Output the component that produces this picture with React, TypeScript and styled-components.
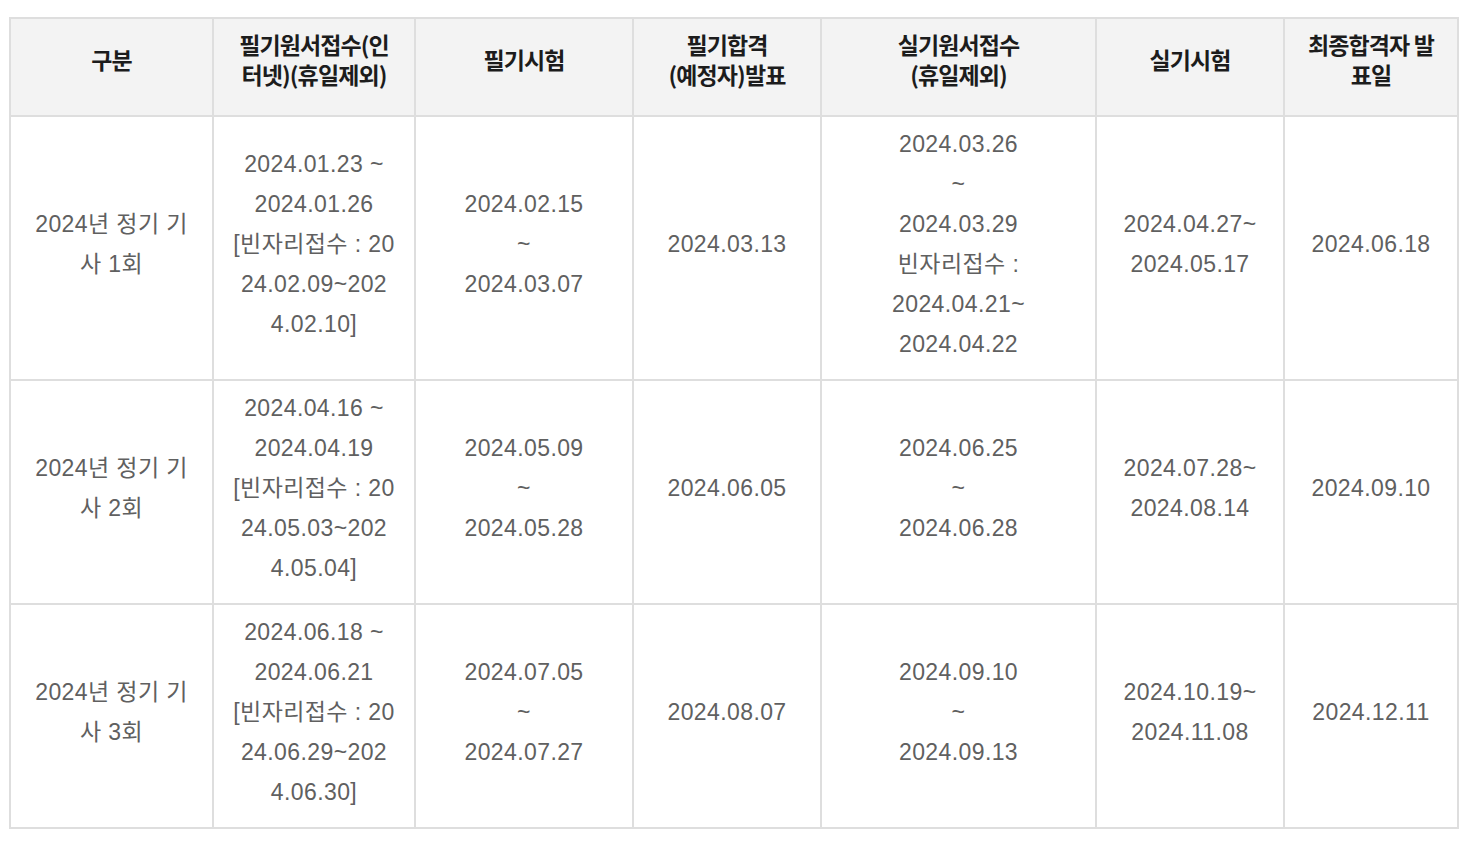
import styled, { createGlobalStyle } from "styled-components";

const GlobalStyle = createGlobalStyle`
  html, body {
    margin: 0;
    padding: 0;
    background: #ffffff;
  }
  body {
    font-family: "Liberation Sans", "Noto Sans CJK KR", sans-serif;
  }
`;

const headers = [
  ["구분"],
  ["필기원서접수(인", "터넷)(휴일제외)"],
  ["필기시험"],
  ["필기합격", "(예정자)발표"],
  ["실기원서접수", "(휴일제외)"],
  ["실기시험"],
  ["최종합격자 발", "표일"],
];

const rows = [
  [
    ["2024년 정기 기", "사 1회"],
    ["2024.01.23 ~", "2024.01.26", "[빈자리접수 : 20", "24.02.09~202", "4.02.10]"],
    ["2024.02.15", "~", "2024.03.07"],
    ["2024.03.13"],
    ["2024.03.26", "~", "2024.03.29", "빈자리접수 :", "2024.04.21~", "2024.04.22"],
    ["2024.04.27~", "2024.05.17"],
    ["2024.06.18"],
  ],
  [
    ["2024년 정기 기", "사 2회"],
    ["2024.04.16 ~", "2024.04.19", "[빈자리접수 : 20", "24.05.03~202", "4.05.04]"],
    ["2024.05.09", "~", "2024.05.28"],
    ["2024.06.05"],
    ["2024.06.25", "~", "2024.06.28"],
    ["2024.07.28~", "2024.08.14"],
    ["2024.09.10"],
  ],
  [
    ["2024년 정기 기", "사 3회"],
    ["2024.06.18 ~", "2024.06.21", "[빈자리접수 : 20", "24.06.29~202", "4.06.30]"],
    ["2024.07.05", "~", "2024.07.27"],
    ["2024.08.07"],
    ["2024.09.10", "~", "2024.09.13"],
    ["2024.10.19~", "2024.11.08"],
    ["2024.12.11"],
  ],
];

const App = () => {
  return (
    <>
      <GlobalStyle />
      <Page>
        <Table>
          <Row>
            {headers.map((lines, i) => (
              <HeadCell key={"h" + i}>
                {lines.map((l, j) => (
                  <Line key={j}>{l}</Line>
                ))}
              </HeadCell>
            ))}
          </Row>
          {rows.map((row, r) => (
            <Row key={r}>
              {row.map((lines, c) => (
                <BodyCell key={c}>
                  {lines.map((l, j) => (
                    <Line key={j}>{l}</Line>
                  ))}
                </BodyCell>
              ))}
            </Row>
          ))}
        </Table>
      </Page>
    </>
  );
};

const Page: any = styled.div`
  padding: 17px 0 0 9px;
`;

const Table: any = styled.div`
  display: grid;
  grid-template-columns: 201px 200px 216px 186px 273px 186px 172px;
  gap: 2px;
  padding: 2px;
  width: 1450px;
  box-sizing: border-box;
  background: #dedede;
`;

const Row: any = styled.div`
  display: contents;
`;

const HeadCell: any = styled.div`
  display: flex;
  flex-direction: column;
  justify-content: center;
  align-items: center;
  background: #f3f3f3;
  padding: 10px 10px 26px;
  min-height: 60px;
  color: #1c1c1c;
  font-family: "Noto Sans CJK KR", "Liberation Sans", sans-serif;
  font-weight: 700;
  font-size: 23px;
  letter-spacing: -0.9px;
  line-height: 30px;
  text-align: center;
`;

const BodyCell: any = styled.div`
  display: flex;
  flex-direction: column;
  justify-content: center;
  align-items: center;
  background: #ffffff;
  padding: 7px 10px 15px;
  color: #606060;
  font-size: 23px;
  letter-spacing: 0.4px;
  line-height: 40px;
  text-align: center;
`;

const Line: any = styled.div`
  white-space: nowrap;
`;

export default App;
